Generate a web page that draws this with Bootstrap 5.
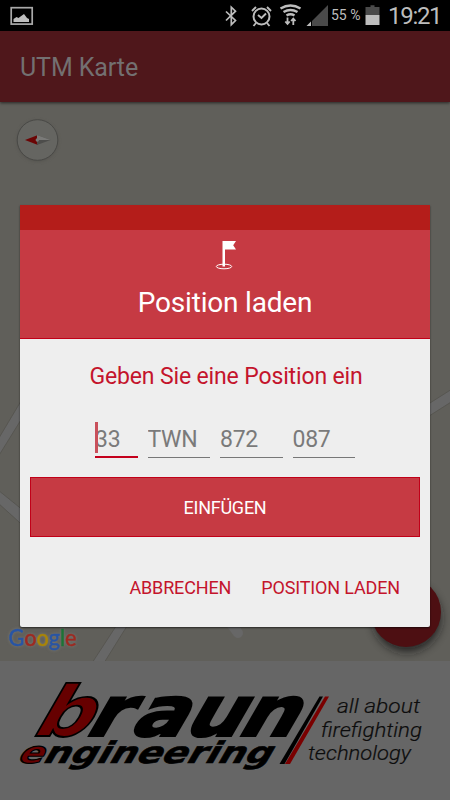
<!DOCTYPE html>
<html lang="de">
<head>
<meta charset="utf-8">
<meta name="viewport" content="width=device-width, initial-scale=1">
<title>UTM Karte</title>
<link href="https://cdn.jsdelivr.net/npm/bootstrap@5.3.0/dist/css/bootstrap.min.css" rel="stylesheet">
<style>
body { font-family: Roboto, "Liberation Sans", sans-serif; background: #666; }
.screen { width: 450px; height: 800px; }
.status-bar { height: 31px; background: #000; color: #bdbdbd; }
.status-pct { width: 35px; padding-left: 1px; font-size: 14px; line-height: 33px; }
.status-clock { font-size: 24px; line-height: 32px; letter-spacing: -1.3px; margin-left: 8px; padding-top: 1px; }
.app-bar { height: 71px; background: #4f171b; color: #737071; font-size: 25px; letter-spacing: -.1px; padding: 3px 20px 0; box-shadow: 0 1px 3px rgba(0,0,0,.6); z-index: 1; }
.map-area { height: 559px; background: #605f5a; }
.map-area svg, .brand-area svg { display: block; }
.google-word { filter: drop-shadow(0 0 1.5px rgba(140,140,135,.6)); }
.brand-area { height: 139px; background: #666; }
.dialog-box { top: 205px; left: 20px; width: 410px; height: 422px; background: #eee; border-radius: 0 0 2px 2px; box-shadow: 0 1px 2px rgba(0,0,0,.6); z-index: 2; }
.dialog-strip { height: 25px; background: #b41d1a; }
.dialog-head { height: 109px; background: #c63a43; border-bottom: 1px solid #c10018; color: #fff; padding-top: 10px; }
.dialog-title { font-size: 28px; line-height: 34px; margin-top: 16px; letter-spacing: -.2px; }
.dialog-prompt { color: #c4142c; font-size: 23px; line-height: 28px; margin-top: 24px; letter-spacing: -.14px; padding-left: 2px; }
.fields { gap: 10px; margin-top: 31px; padding-left: 75px; }
.coord { width: 62.5px; height: 36px; padding: 0; border: 0; border-bottom: 1px solid #777; border-radius: 0; background: transparent; color: #7a7a7a; font-size: 23px; line-height: 34px; letter-spacing: -.3px; }
.coord::placeholder { color: #7a7a7a; opacity: 1; }
.coord-active { width: 42.5px; border-bottom: 2px solid #c4001c; }
.caret { left: 75px; top: 0; width: 3px; height: 31px; background: #c9505b; }
.btn-insert { height: 60px; margin: 19px 10px 0; background: #c63a43; border: 1px solid #c10018; border-radius: 0; color: #fff; font-size: 18px; letter-spacing: -.25px; padding-top: 6px; }
.dialog-actions { gap: 30px; margin-top: 37px; padding-right: 30px; }
.btn-flat { color: #c4142c; font-size: 18px; line-height: 27px; padding: 0; border: 0; letter-spacing: -.15px; }
</style>
<script src="https://cdn.jsdelivr.net/npm/bootstrap@5.3.0/dist/js/bootstrap.bundle.min.js"></script>
</head>
<body>
<div class="screen position-relative overflow-hidden d-flex flex-column">
  <header class="status-bar d-flex align-items-center flex-shrink-0">
    <svg class="flex-shrink-0" width="224" height="31" viewBox="0 0 224 31">
      <rect x="11.200" y="7.700" width="21" height="16.400" fill="none" stroke="#a9a9a9" stroke-width="1.700"/>
      <path d="M13.500 22v-3l3-2 2 1 2-1.500 3.500-2.500 3 4 2 1v3z" fill="#bdbdbd"/>
    </svg>
    <svg class="flex-shrink-0" width="106" height="31" viewBox="224 0 106 31" fill="none" stroke="#bdbdbd" stroke-width="1.700">
      <path d="M226 11.500l9.500 9-4.200 4.200V7.200l4.200 4-9.500 9.300"/>
      <circle cx="261.500" cy="16.500" r="8" stroke-width="2"/>
      <path d="M258 15l3.500 3 4.500-4.500M252 11l4-4M271 11l-4-4M256 23l-2.500 3M267 23l2.500 3" stroke-width="1.900"/>
      <path d="M280.500 8.500q10-6 20 0M283.500 12q7-4 14 0M286.500 15.500q4-2.500 8 0" stroke-width="2.500"/>
      <path d="M287.500 17.500v6m-2.200-2l2.200 2.500 2.200-2.500M293.300 25v-6m-2.200 2l2.200-2.500 2.200 2.500" stroke-width="1.800"/>
      <path d="M328 5v21h-16V21z" fill="#4a4a4a" stroke="none"/>
      <path d="M311 21.500V26h-4.500z" fill="#bdbdbd" stroke="none"/>
    </svg>
    <span class="status-pct flex-shrink-0 text-nowrap">55 %</span>
    <svg class="flex-shrink-0" width="15" height="31" viewBox="365 0 15 31">
      <path d="M365.500 7h5V5.200h4V7h5v8h-14z" fill="#4a4a4a"/>
      <path d="M365.500 15h14v10h-14z" fill="#bdbdbd"/>
    </svg>
    <span class="status-clock text-nowrap">19:21</span>
  </header>
  <nav class="app-bar d-flex align-items-center flex-shrink-0 position-relative">UTM Karte</nav>
  <main class="map-area flex-shrink-0">
    <svg width="450" height="559" viewBox="0 102 450 559">
      <defs>
        <filter id="soft" x="-50%" y="-50%" width="200%" height="200%"><feGaussianBlur stdDeviation="5"/></filter>
        <filter id="halo" x="-20%" y="-40%" width="140%" height="180%"><feGaussianBlur stdDeviation="1.500"/></filter>
      </defs>
      <g fill="#676767" stroke="#575651" stroke-width="1">
        <path d="M-2 439.500L24 396v19L-2 457z"/>
        <path d="M-2 490L24 511v15.500L-2 503z"/>
        <path d="M120 620L92 663h12L132 618z"/>
        <path d="M426 405.500L452 389v12.500L426 418z"/>
      </g>
      <path d="M229 621L238 633" stroke="#676767" stroke-width="10" stroke-linecap="round"/>
      <circle cx="37.500" cy="141" r="21" fill="#4f4e4a" filter="url(#halo)" opacity=".5"/>
      <circle cx="37.500" cy="140" r="20.300" fill="#656561" stroke="#494946" stroke-width="1"/>
      <path d="M25 140l13-5v10z" fill="#6b0505"/>
      <path d="M50.500 140l-13.500-5v10z" fill="#4d4d4b"/>
      <path d="M50.500 140H37v-5z" fill="#7a7a78"/>
      <circle cx="37.300" cy="140" r="1.700" fill="#7a7a78"/>
      <circle cx="407" cy="618" r="34" fill="#151515" filter="url(#soft)" opacity=".75"/>
      <circle cx="406" cy="612" r="35" fill="#4d0f12"/>
      <text class="google-word" x="8.500" y="646" font-family="Lato" font-size="22.500" textLength="68" lengthAdjust="spacingAndGlyphs" stroke-width=".5"><tspan fill="#2855a5" stroke="#2855a5">G</tspan><tspan fill="#9d2a22" stroke="#9d2a22">o</tspan><tspan fill="#a98508" stroke="#a98508">o</tspan><tspan fill="#2855a5" stroke="#2855a5">g</tspan><tspan fill="#1c7335" stroke="#1c7335">l</tspan><tspan fill="#9d2a22" stroke="#9d2a22">e</tspan></text>
    </svg>
  </main>
  <footer class="brand-area flex-shrink-0">
    <svg width="450" height="139" viewBox="0 661 450 139">
      <g font-family="DejaVu Sans" font-weight="700">
        <g transform="translate(0 736) skewX(-30) scale(1.150 1)" font-size="70" stroke="#000" stroke-width="2.200">
          <text y="0" x="25" fill="#660000" stroke-width="1.800">b</text>
          <text y="0" x="71.500 110.500 157 204">raun</text>
        </g>
        <g transform="translate(0 763) skewX(-30)" font-size="30" stroke="#000" stroke-width=".6">
          <text x="16" y="0" textLength="253" lengthAdjust="spacingAndGlyphs"><tspan fill="#660000" stroke-width="1.200">e</tspan>ngineering</text>
        </g>
      </g>
      <path d="M319.500 696.500h3.500L284.500 764h-5z"/>
      <path d="M325 696.500h4L290 764h-5z" fill="#7a0000"/>
      <g font-size="21" font-style="italic" fill="#0c0c0c" stroke="#0c0c0c" stroke-width=".2" font-weight="300">
        <text x="337" y="713" textLength="83" lengthAdjust="spacingAndGlyphs">all about</text>
        <text x="321" y="736.500" textLength="101" lengthAdjust="spacingAndGlyphs">firefighting</text>
        <text x="308" y="759.500" textLength="103" lengthAdjust="spacingAndGlyphs">technology</text>
      </g>
    </svg>
  </footer>

  <section class="dialog-box position-absolute" role="dialog" aria-labelledby="dlgTitle">
    <div class="dialog-strip"></div>
    <div class="dialog-head d-flex flex-column align-items-center">
      <svg class="flex-shrink-0" width="24" height="30" viewBox="213 240 24 30">
        <ellipse cx="224" cy="266.500" rx="7.700" ry="2.300" fill="none" stroke="#fff" stroke-width="1"/>
        <path d="M222.500 241H236l-2.800 4.200 2.800 4.200h-11V266.500h-2.500z" fill="#fff"/>
      </svg>
      <h1 class="dialog-title fw-normal mb-0" id="dlgTitle">Position laden</h1>
    </div>
    <p class="dialog-prompt text-center mb-0">Geben Sie eine Position ein</p>
    <div class="fields d-flex position-relative">
      <input class="coord coord-active" placeholder="33" aria-label="Zone">
      <input class="coord" placeholder="TWN" aria-label="Quadrat">
      <input class="coord" placeholder="872" aria-label="Ostwert">
      <input class="coord" placeholder="087" aria-label="Nordwert">
      <span class="caret position-absolute"></span>
    </div>
    <div class="d-grid"><button type="button" class="btn btn-insert">EINFÜGEN</button></div>
    <div class="dialog-actions d-flex justify-content-end">
      <button type="button" class="btn btn-flat">ABBRECHEN</button>
      <button type="button" class="btn btn-flat">POSITION LADEN</button>
    </div>
  </section>
</div>
</body>
</html>
